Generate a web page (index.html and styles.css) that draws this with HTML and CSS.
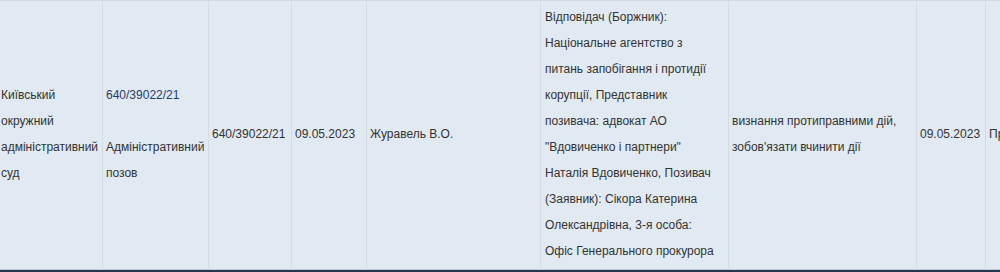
FILE: index.html
```html
<!DOCTYPE html>
<html lang="uk">
<head>
<meta charset="utf-8">
<title>Справа 640/39022/21</title>
<link rel="stylesheet" href="styles.css">
</head>
<body>
<div class="page">
  <table class="cases">
    <tbody>
      <tr>
        <td class="c1">Київський окружний адміністративний суд</td>
        <td class="c2"><a href="#" class="case-link">640/39022/21</a><br><br>Адміністративний позов</td>
        <td class="c3">640/39022/21</td>
        <td class="c4">09.05.2023</td>
        <td class="c5">Журавель В.О.</td>
        <td class="c6">Відповідач (Боржник): Національне агентство з питань запобігання і протидії корупції, Представник позивача: адвокат АО "Вдовиченко і партнери" Наталія Вдовиченко, Позивач (Заявник): Сікора Катерина Олександрівна, 3-я особа: <span class="party">Офіс Генерального прокурора</span></td>
        <td class="c7">визнання протиправними дій, зобов'язати вчинити дії</td>
        <td class="c8">09.05.2023</td>
        <td class="c9">Призначено до розгляду</td>
      </tr>
    </tbody>
  </table>
  <div class="footer-bar"></div>
</div>
</body>
</html>
```

FILE: styles.css
```css
html, body {
  margin: 0;
  padding: 0;
  background: #e1e9f2;
  overflow: hidden;
}

.page {
  width: 1000px;
  height: 272px;
  overflow: hidden;
}

.cases {
  border-collapse: separate;
  border-spacing: 0;
  table-layout: fixed;
  width: 1300px;
  margin-left: -2px;
  border-top: 1px solid #d6dadf;
  font-family: "Liberation Sans", Arial, sans-serif;
  font-size: 12px;
  line-height: 26.1px;
  color: #333;
  background: #e1e9f2;
}

.cases td {
  box-sizing: border-box;
  height: 269px;
  vertical-align: middle;
  padding: 2px 4px 4px 3px;
  border-right: 1px solid #d3dbe4;
  border-bottom: 1px solid #c3cad3;
}

.c1 { width: 105px; }
.c2 { width: 106px; }
.c3 { width: 83px; }
.c4 { width: 75px; }
.c5 { width: 174px; }
.c6 { width: 188px; }
.c7 { width: 188px; }
.c8 { width: 69px; }
.c9 { width: 313px; white-space: nowrap; }

.cases td.c6 {
  padding-left: 4px;
  padding-right: 11px;
}

.party {
  white-space: nowrap;
}

.case-link {
  color: #1f3d6b;
  text-decoration: none;
}

.footer-bar {
  height: 2px;
  background: #24374e;
}
```
